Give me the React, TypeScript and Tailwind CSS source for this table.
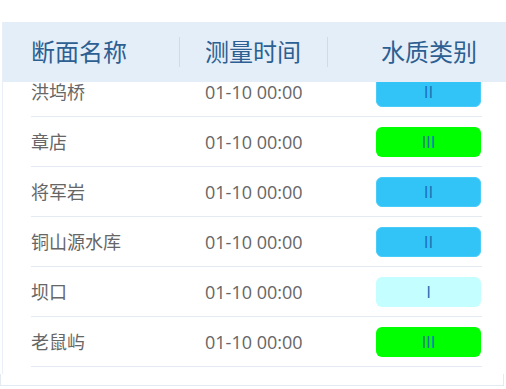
import React from "react";

const rows = [
  { name: "洪坞桥", time: "01-10 00:00", level: "II" },
  { name: "章店", time: "01-10 00:00", level: "III" },
  { name: "将军岩", time: "01-10 00:00", level: "II" },
  { name: "铜山源水库", time: "01-10 00:00", level: "II" },
  { name: "坝口", time: "01-10 00:00", level: "I" },
  { name: "老鼠屿", time: "01-10 00:00", level: "III" },
];

function badgeClass(level: string) {
  if (level === "III") return "bg-[#00ff00]";
  if (level === "I") return "bg-[#c4feff]";
  return "bg-[#33c4f7] border border-[#49ccf8]";
}

export default function App() {
  return (
    <div
      className="w-[506px] h-[389px] bg-white overflow-hidden flex flex-col"
      style={{ fontFamily: '"Open Sans", "Noto Sans CJK SC", sans-serif' }}
    >
      <div className="h-[22px] shrink-0" />
      <div className="ml-[2px] h-[352px] shrink-0 border-l border-[#e8eff7] flex flex-col">
        <div className="h-[60px] shrink-0 bg-[#e4eef8] flex items-center text-[24px] leading-none text-[#2d5f92]">
          <div className="w-[176px] shrink-0 pl-[28px]">断面名称</div>
          <div className="w-px h-[30px] bg-[#cbdcec] shrink-0" />
          <div className="w-[147px] shrink-0 pl-[25px]">测量时间</div>
          <div className="w-px h-[30px] bg-[#cbdcec] shrink-0" />
          <div className="flex-1 pl-[53px]">水质类别</div>
        </div>
        <div className="flex-1 overflow-hidden">
          <div className="-mt-[15px] ml-[28px] w-[451px]">
            {rows.map((r, i) => (
              <div
                key={i}
                className="h-[50px] flex items-center border-b border-[#e4eaf2] text-[18px] leading-none text-[#666666]"
              >
                <div className="w-[174px] shrink-0">{r.name}</div>
                <div className="w-[171px] shrink-0 text-[18px]">{r.time}</div>
                <div
                  className={`w-[105px] h-[30px] rounded-[6px] flex items-center justify-center text-[#1c6fb4] text-[17px] ${badgeClass(r.level)}`}
                >
                  {r.level}
                </div>
              </div>
            ))}
          </div>
        </div>
      </div>
      <div className="w-[504px] h-[12px] shrink-0 border-l border-r border-b border-[#e4eaf2]" />
    </div>
  );
}
